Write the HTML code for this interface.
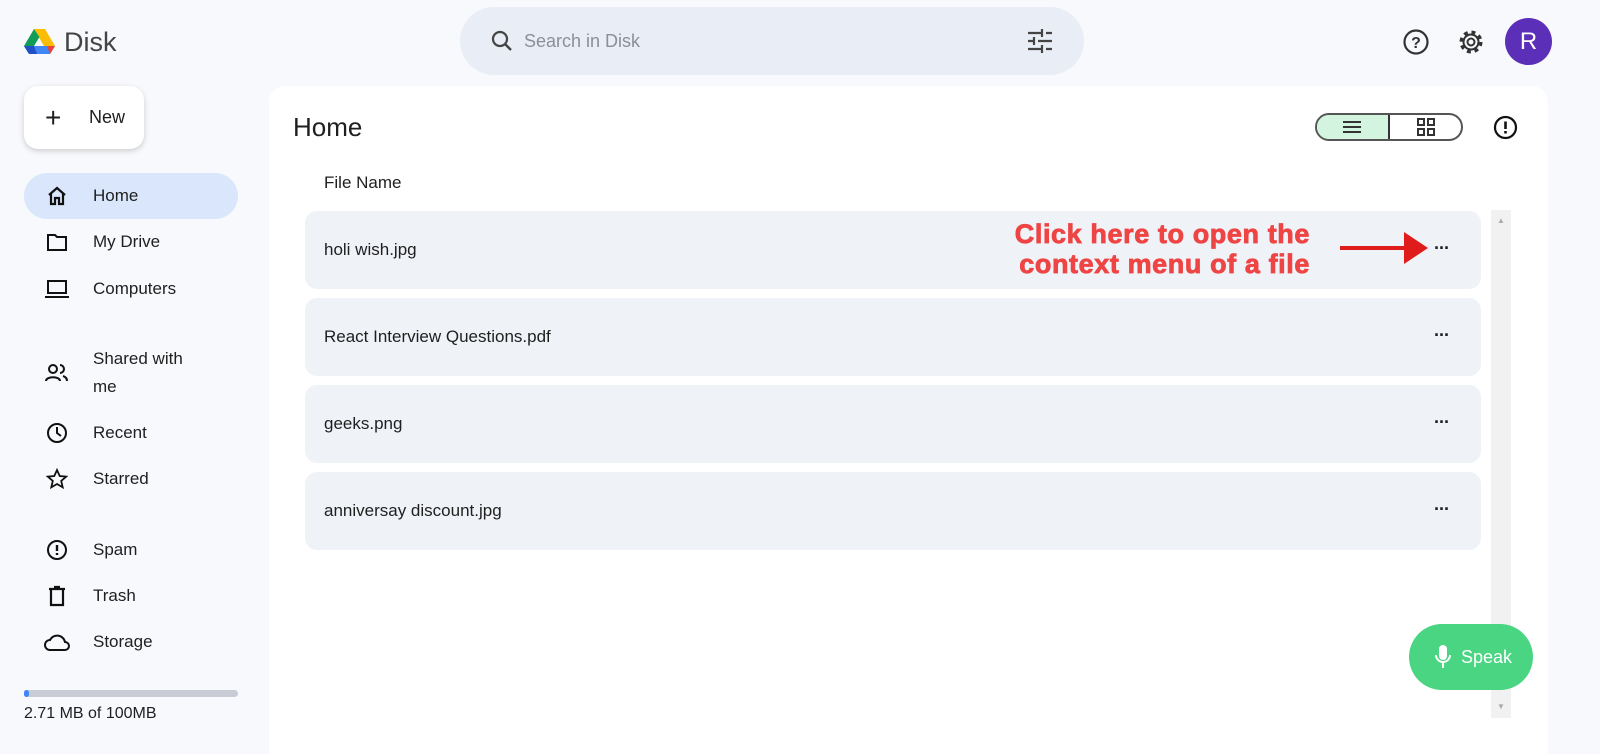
<!DOCTYPE html><html><head><style>
*{box-sizing:border-box;margin:0;padding:0}
body{width:1600px;height:754px;background:#f8f9fc;font-family:"Liberation Sans",sans-serif;color:#1f1f1f;position:relative;overflow:hidden}
.a{position:absolute}
.nav{position:absolute;left:24px;width:214px;height:46px;display:flex;align-items:center;font-size:17px}
.nav i{width:69px;display:flex;justify-content:center;padding-right:4px;margin-left:0}
.row{position:absolute;left:305px;width:1176px;height:78px;background:#eff2f7;border-radius:12px;font-size:17px;display:flex;align-items:center;padding-left:19px}
.dots{position:absolute;right:32px;top:37px;font-size:18px;font-weight:bold;line-height:0;letter-spacing:-1px}
</style></head><body>
<svg class="a" style="left:24px;top:28px" width="31" height="27" viewBox="0 0 31 27"><path d="M10 1h11L31 18H20z" fill="#fbbc04"/><path d="M10 1L0 18l5 8 10.5-17z" fill="#0f9d58"/><path d="M5 26h21l5-8H10z" fill="#4285f4"/><path d="M5 26h8l-3-8H0z" fill="#2150c8"/><path d="M26 26l5-8h-8z" fill="#ea4335"/></svg>
<div class="a" style="left:64px;top:27px;font-size:27px;color:#444">Disk</div>
<div class="a" style="left:460px;top:7px;width:624px;height:68px;background:#e9edf6;border-radius:34px"></div>
<svg class="a" style="left:490px;top:29px" width="24" height="24" viewBox="0 0 24 24"><circle cx="10" cy="10" r="7" fill="none" stroke="#444" stroke-width="2.2"/><path d="M15 15l6 6" stroke="#444" stroke-width="2.4"/></svg>
<div class="a" style="left:524px;top:31px;font-size:18px;color:#8a8f98">Search in Disk</div>
<svg class="a" style="left:1027px;top:29px" width="26" height="24" viewBox="0 0 26 24" stroke="#444" stroke-width="2.2"><path d="M1 4h14M19 4h6M15 0v8M1 12h6M11 12h14M7 8v8M1 20h14M19 20h6M15 16v8"/></svg>
<svg class="a" style="left:1402px;top:28px" width="28" height="28" viewBox="0 0 28 28"><circle cx="14" cy="14" r="11.5" fill="none" stroke="#333" stroke-width="2.2"/><text x="14" y="20" font-size="16" text-anchor="middle" font-family="Liberation Sans" fill="#333" font-weight="bold">?</text></svg>
<svg class="a" style="left:1457px;top:28px" width="28" height="28" viewBox="0 0 28 28"><circle cx="14" cy="14" r="9" fill="none" stroke="#333" stroke-width="5" stroke-dasharray="3.6 3.5"/><circle cx="14" cy="14" r="7.5" fill="none" stroke="#333" stroke-width="2"/><circle cx="14" cy="14" r="3.5" fill="none" stroke="#333" stroke-width="2"/></svg>
<div class="a" style="left:1505px;top:18px;width:47px;height:47px;border-radius:50%;background:#5b2fb8;color:#fff;font-size:24px;text-align:center;line-height:47px">R</div>
<div class="a" style="left:24px;top:86px;width:120px;height:63px;background:#fff;border-radius:14px;box-shadow:0 2px 6px rgba(0,0,0,.18)"></div>
<div class="a" style="left:45px;top:102px;font-size:28px;font-weight:300">+</div>
<div class="a" style="left:89px;top:107px;font-size:18px">New</div>
<div class="nav" style="top:173px;background:#d9e6fb;border-radius:23px"><i><svg width="22" height="22" viewBox="0 0 22 22" fill="none" stroke="#111" stroke-width="2.2"><path d="M3 10L11 3l8 7M5 9v10h4v-6h4v6h4V9"/></svg></i>Home</div>
<div class="nav" style="top:219px"><i><svg width="22" height="22" viewBox="0 0 22 22" fill="none" stroke="#111" stroke-width="2"><path d="M2 4h7l2 2h9v13H2z"/></svg></i>My Drive</div>
<div class="nav" style="top:266px"><i><svg width="26" height="22" viewBox="0 0 26 22" fill="none" stroke="#111" stroke-width="2"><rect x="4" y="3" width="18" height="12"/><path d="M1 19h24"/></svg></i>Computers</div>
<div class="nav" style="top:343px;height:60px;line-height:28px"><i><svg width="24" height="22" viewBox="0 0 24 22" fill="none" stroke="#111" stroke-width="2"><circle cx="8" cy="7" r="4"/><path d="M1 19c0-5 14-5 14 0M15 3a4 4 0 010 8M18 14c3 1 4 3 4 5"/></svg></i><span>Shared with<br>me</span></div>
<div class="nav" style="top:410px"><i><svg width="22" height="22" viewBox="0 0 22 22" fill="none" stroke="#111" stroke-width="2"><circle cx="11" cy="11" r="9"/><path d="M11 5v6l4 3"/></svg></i>Recent</div>
<div class="nav" style="top:456px"><i><svg width="22" height="22" viewBox="0 0 22 22" fill="none" stroke="#111" stroke-width="1.8"><path d="M11 2l2.7 6 6.5.6-5 4.3 1.5 6.4L11 16l-5.7 3.3 1.5-6.4-5-4.3 6.5-.6z"/></svg></i>Starred</div>
<div class="nav" style="top:527px"><i><svg width="22" height="22" viewBox="0 0 22 22"><circle cx="11" cy="11" r="9" fill="none" stroke="#111" stroke-width="2"/><path d="M11 6v6M11 14v2" stroke="#111" stroke-width="2.4"/></svg></i>Spam</div>
<div class="nav" style="top:573px"><i><svg width="22" height="22" viewBox="0 0 22 22" fill="none" stroke="#111" stroke-width="2.2"><path d="M3 4h16M8 2h6M5 5v15h12V5"/></svg></i>Trash</div>
<div class="nav" style="top:619px"><i><svg width="28" height="22" viewBox="0 0 28 22" fill="none" stroke="#111" stroke-width="2"><path d="M7 19a5 5 0 010-10 8 8 0 0115 2 4 4 0 010 8z"/></svg></i>Storage</div>
<div class="a" style="left:24px;top:690px;width:214px;height:7px;background:#c9ccd4;border-radius:4px"><div style="width:5px;height:7px;background:#4285f4;border-radius:4px"></div></div>
<div class="a" style="left:24px;top:705px;font-size:16px">2.71 MB of 100MB</div>
<div class="a" style="left:269px;top:86px;width:1279px;height:668px;background:#fff;border-radius:16px 16px 0 0"></div>
<div class="a" style="left:293px;top:112px;font-size:26px">Home</div>
<div class="a" style="left:1315px;top:113px;width:148px;height:28px;border:2px solid #555;border-radius:14px;overflow:hidden;display:flex"><div style="width:73px;background:#d3f5df;border-right:2px solid #333"></div></div>
<svg class="a" style="left:1342px;top:120px" width="20" height="14" viewBox="0 0 20 14" stroke="#333" stroke-width="2"><path d="M1 2h18M1 7h18M1 12h18"/></svg>
<svg class="a" style="left:1416px;top:117px" width="20" height="20" viewBox="0 0 20 20" fill="none" stroke="#333" stroke-width="2"><rect x="2" y="2" width="6" height="6"/><rect x="12" y="2" width="6" height="6"/><rect x="2" y="12" width="6" height="6"/><rect x="12" y="12" width="6" height="6"/></svg>
<svg class="a" style="left:1493px;top:115px" width="25" height="25" viewBox="0 0 25 25"><circle cx="12.5" cy="12.5" r="10.5" fill="none" stroke="#111" stroke-width="2.2"/><path d="M12.5 6.5v7.5M12.5 16v2.5" stroke="#111" stroke-width="2.6"/></svg>
<div class="a" style="left:324px;top:173px;font-size:17px">File Name</div>
<div class="row" style="top:211px">holi wish.jpg<span class="dots">···</span></div>
<div class="row" style="top:298px">React Interview Questions.pdf<span class="dots">···</span></div>
<div class="row" style="top:385px">geeks.png<span class="dots">···</span></div>
<div class="row" style="top:472px">anniversay discount.jpg<span class="dots">···</span></div>
<div class="a" style="left:930px;top:219px;font-weight:bold;color:#ef4444;line-height:30px;text-align:right;width:380px;font-family:'Liberation Sans',sans-serif;font-size:27px;letter-spacing:.6px;-webkit-text-stroke:.8px #ef4444">Click here to open the context menu of a file</div>
<svg class="a" style="left:1340px;top:230px" width="88" height="36" viewBox="0 0 88 36"><path d="M0 18h68" stroke="#e01b1b" stroke-width="4"/><path d="M64 2l24 16-24 16z" fill="#e01b1b"/></svg>
<div class="a" style="left:1491px;top:210px;width:20px;height:508px;background:#f1f1f1"></div>
<div class="a" style="left:1497px;top:216px;font-size:8px;color:#aaa">▲</div>
<div class="a" style="left:1497px;top:702px;font-size:8px;color:#aaa">▼</div>
<div class="a" style="left:1409px;top:624px;width:124px;height:66px;border-radius:33px;background:#4ad582;color:#fff;font-size:18px;display:flex;align-items:center;padding-left:24px"><svg width="20" height="26" viewBox="0 0 20 26" style="margin-right:8px"><rect x="6" y="1" width="8" height="15" rx="4" fill="#fff"/><path d="M3 11a7 7 0 0014 0M10 18v6" stroke="#fff" stroke-width="2" fill="none"/></svg>Speak</div>
</body></html>
